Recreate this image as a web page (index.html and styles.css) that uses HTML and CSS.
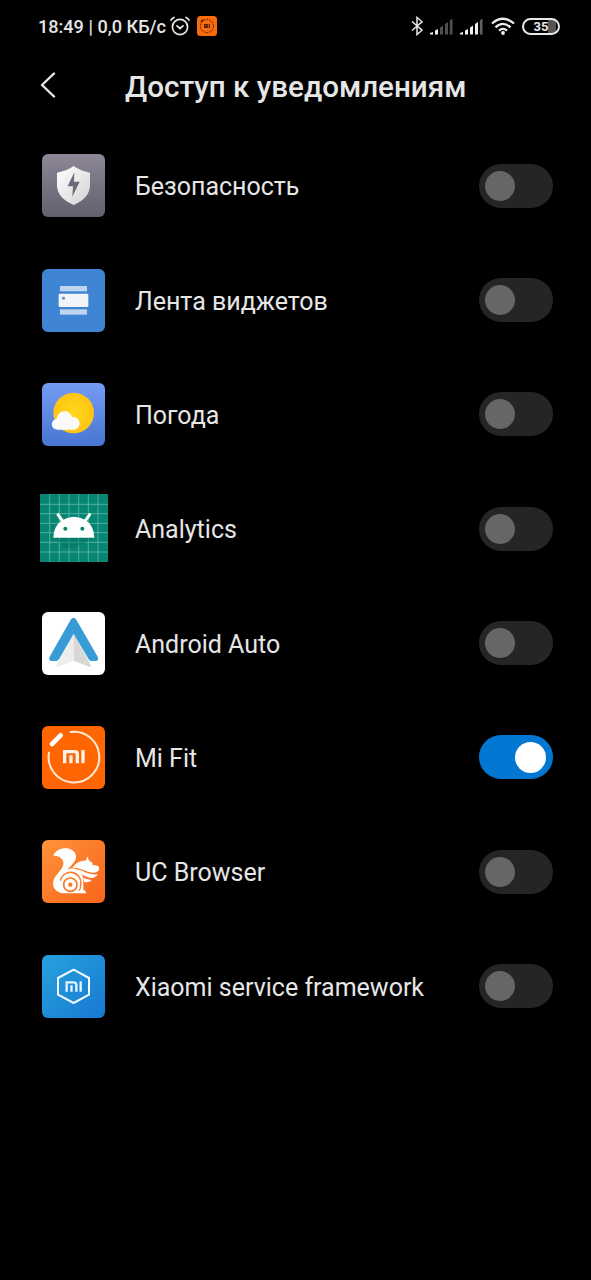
FILE: index.html
```html
<!DOCTYPE html>
<html lang="ru">
  <head>
    <meta charset="UTF-8" />
    <meta name="viewport" content="width=device-width, initial-scale=1.0" />
    <title>Доступ к уведомлениям</title>
    <link rel="stylesheet" href="styles.css">
  </head>
  <body>
    <div class="status-bar">
      <span class="status-text">18:49 | 0,0 КБ/с</span>
      <svg class="alarm" viewBox="0 0 20 20" width="20" height="20">
        <g fill="none" stroke="#e8e8e8" stroke-width="1.7" stroke-linecap="round">
          <circle cx="10" cy="11" r="7.6" />
          <path d="M1 4.2 Q2 2.4 4 1.5M19 4.2 Q18 2.4 16 1.5M7 9.8l3 2.7 3-2.7" />
        </g>
      </svg>
      <svg class="notice" viewBox="0 0 20 20" width="20" height="20">
        <rect width="20" height="20" rx="3.5" fill="#fb6a0c" />
        <circle cx="10" cy="10" r="6.6" fill="none" stroke="#7a3208" stroke-width="1.1" stroke-dasharray="2 1" />
        <path d="M4 5.6l2.3-2.1" stroke="#5a2608" stroke-width="1.6" />
        <path d="M7.7 12V8.7h2.5V12M9 10v2M12.3 8.2V12" fill="none" stroke="#4a1d04" stroke-width="1.2" />
      </svg>
      <div class="status-icons">
        <svg viewBox="0 0 12 20" width="12" height="20">
          <path d="M1 5.5l10 8.7-5 4.3V1.5l5 4.3-10 8.7" fill="none" stroke="#e8e8e8" stroke-width="1.5" />
        </svg>
        <svg class="signal" viewBox="0 0 23 17" width="23" height="17">
          <path d="M0 16.5V15l3-1v2.5zM5 16.5v-4L8 11v5.500z" fill="#eee" />
          <path d="M10 16.5v-7l3-2v9zM15 16.5V6l3-2v12.500zM19.800 16.500v-14l2.700-2v16z" fill="#505050" />
        </svg>
        <svg class="signal" viewBox="0 0 23 17" width="23" height="17">
          <path d="M0 16.500V15l3-1v2.500zM5 16.500v-4L8 11v5.500zM10 16.500v-7l3-2v9zM15 16.500V6l3-2v12.500z" fill="#eee" />
          <path d="M19.800 16.500v-14l2.700-2v16z" fill="#606060" />
        </svg>
        <svg class="wifi" viewBox="0 0 24 18" width="24" height="18">
          <g fill="none" stroke="#eee" stroke-width="2.3">
            <path d="M1 6.500Q12-3 23 6.500M4.500 10.300Q12 3.500 19.500 10.300M8 13.700Q12 10 16 13.700" />
          </g>
          <circle cx="12" cy="16" r="1.900" fill="#eee" />
        </svg>
        <span class="battery">35</span>
      </div>
    </div>

    <header class="header">
      <svg class="back" viewBox="0 0 16 26" width="16" height="26">
        <path d="M14 1.500L2 13l12 11.500" fill="none" stroke="#e8e8e8" stroke-width="2.400" stroke-linecap="round" stroke-linejoin="round" />
      </svg>
      <h1>Доступ к уведомлениям</h1>
    </header>

    <main class="app-list">
      <div class="app">
        <svg class="icon security" viewBox="36 26 189 189">
          <defs>
            <linearGradient id="shield" x1="0" y1="0" x2="1" y2="1">
              <stop offset="0" stop-color="#fff" />
              <stop offset="1" stop-color="#d2d2d2" />
            </linearGradient>
          </defs>
          <path d="M131 62Q152 77 180 82V120Q180 158 131 179Q81 158 81 120V82Q110 77 131 62z" fill="url(#shield)" />
          <path d="M133 81L113 123H129L127 154L149 109H132z" fill="#6d6979" />
        </svg>
        <span class="name">Безопасность</span>
        <span class="toggle"></span>
      </div>
      <div class="app">
        <svg class="icon widgets" viewBox="36 26 189 189">
          <rect x="90" y="77" width="81" height="16" fill="#bdd5f1" />
          <rect x="90" y="147" width="81" height="16" fill="#bdd5f1" />
          <rect x="86" y="100" width="89" height="40" rx="3" fill="#f1f4f8" />
          <rect x="96" y="109" width="9" height="9" rx="2" fill="#6e9bd0" />
        </svg>
        <span class="name">Лента виджетов</span>
        <span class="toggle"></span>
      </div>
      <div class="app">
        <svg class="icon weather" viewBox="36 26 189 189">
          <defs>
            <radialGradient id="sun">
              <stop offset="0" stop-color="#ffd91c" />
              <stop offset="1" stop-color="#ffc414" />
            </radialGradient>
          </defs>
          <circle cx="131" cy="116" r="61" fill="url(#sun)" />
          <path d="M82 166C60 165 61 135 80 134C82 106 119 103 126 128C154 126 157 163 132 166z" fill="#fafafa" />
        </svg>
        <span class="name">Погода</span>
        <span class="toggle"></span>
      </div>
      <div class="app">
        <svg class="icon analytics" viewBox="29 27 204 204">
          <path d="M58 27V231M87 27V231M116 27V231M145 27V231M174 27V231M203 27V231M29 58H233M29 86H233M29 115H233M29 143H233M29 172H233M29 201H233" stroke="#5fb8a8" stroke-width="2.500" />
          <path d="M69 158L107 190Q150 184 192 158z" fill="#04705e" opacity=".45" />
          <path d="M69 158Q70 124 95 106Q131 84 167 106Q191 124 192 158z" fill="#fff" />
          <path d="M83 89L98 110M178 89L163 110" stroke="#fff" stroke-width="9" stroke-linecap="round" />
          <circle cx="105" cy="131" r="6" fill="#078573" />
          <circle cx="156" cy="131" r="6" fill="#078573" />
        </svg>
        <span class="name">Analytics</span>
        <span class="toggle"></span>
      </div>
      <div class="app">
        <svg class="icon auto" viewBox="36 26 189 189">
          <path d="M131 90L78 189L82 191L131 172z" fill="#ededed" />
          <path d="M131 90L184 189L180 191L131 172z" fill="#d7d7d7" />
          <path d="M122 49Q130 38 139 49L203 160Q208 173 195 173H184Q179 173 176 168L131 91L87 168Q84 173 78 173H66Q54 172 59 160z" fill="#379bd5" />
        </svg>
        <span class="name">Android Auto</span>
        <span class="toggle"></span>
      </div>
      <div class="app">
        <svg class="icon fit" viewBox="36 26 189 189">
          <path d="M122 44A76 76 0 1 1 57 106" fill="none" stroke="#ffe9d7" stroke-width="6" stroke-linecap="round" />
          <path d="M66 80L92 54" stroke="#fff" stroke-width="14" stroke-linecap="round" />
          <path d="M104 138V103H134Q142 103 142 111V138M123 114V138M159 98V138" fill="none" stroke="#fff3ea" stroke-width="10" />
        </svg>
        <span class="name">Mi Fit</span>
        <span class="toggle on"></span>
      </div>
      <div class="app">
        <svg class="icon uc" viewBox="36 26 189 189">
          <path d="M70 73C79 47 125 42 137 69C144 90 119 105 111 116C122 109 139 111 148 119C157 124 160 139 160 151V176Q169 178 168 186H99C76 184 66 166 70 150C73 132 93 120 99 103C104 88 94 72 70 73z" fill="#fff" />
          <path d="M127 111C137 92 153 87 167 88L172 76L178 89Q190 94 188 101Q198 101 205 105C210 113 207 119 198 123C183 128 172 119 158 115Q142 108 127 111z" fill="#fff" />
          <path d="M142 115C160 114 169 132 203 129C196 141 185 142 174 138Q157 132 142 115z" fill="#fff" />
          <path d="M160 139Q173 145 185 146Q177 156 162 151z" fill="#fff" />
          <g fill="none" stroke="#fb7b25">
            <path d="M91 148A31 31 0 0 1 152 160Q152 170 148 178" stroke-width="4" />
            <circle cx="121" cy="160" r="20" stroke-width="5" />
          </g>
          <circle cx="121" cy="160" r="6.500" fill="#fb7b25" />
        </svg>
        <span class="name">UC Browser</span>
        <span class="toggle"></span>
      </div>
      <div class="app">
        <svg class="icon framework" viewBox="36 26 189 189">
          <path d="M131 70L177 95V145L131 170L84 145V95z" fill="none" stroke="#f2fbff" stroke-width="6" stroke-linejoin="round" />
          <path d="M110 136V108H131Q139 108 139 115V136M124.500 117V136M152 105V136" fill="none" stroke="#e4f5ff" stroke-width="7" />
        </svg>
        <span class="name">Xiaomi service framework</span>
        <span class="toggle"></span>
      </div>
    </main>
  </body>
</html>
```

FILE: styles.css
```css
body {
  font-family: Roboto, "Noto Sans", sans-serif;
  margin: 0;
  height: 1280px;
  background-color: #000;
  color: #e6e6e6;
  overflow: hidden;
}

/* Status bar */
.status-bar {
  display: flex;
  align-items: center;
  height: 52px;
  padding: 0 31px 0 38px;
}

.status-text {
  width: 128px;
  font-size: 18.1px;
  font-weight: 500;
  white-space: nowrap;
}

.alarm {
  margin-left: 4px;
}

.notice {
  margin-left: 7px;
}

.status-icons {
  display: flex;
  align-items: center;
  margin-left: auto;
}

.signal {
  margin-left: 7px;
}

.wifi {
  margin-left: 8px;
}

.battery {
  box-sizing: border-box;
  width: 38px;
  height: 17px;
  margin-left: 7px;
  border: 2px solid #e8e8e8;
  border-radius: 9px;
  background: linear-gradient(90deg, #000 24px, #555 24px 32px, #000 32px);
  font-size: 13px;
  font-weight: 700;
  line-height: 14px;
  text-align: center;
}

/* Header */
.header {
  display: flex;
  align-items: center;
  height: 66px;
  padding: 0 40px;
}

h1 {
  margin: 3px 0 0 69px;
  font-size: 29.6px;
  font-weight: 500;
  line-height: 34px;
  white-space: nowrap;
}

/* App list */
.app-list {
  padding-top: 10.6px;
}

.app {
  display: flex;
  align-items: center;
  height: 114.35px;
  padding: 0 38.5px 0 42px;
}

.icon {
  flex: none;
  width: 63px;
  height: 63px;
  border-radius: 6px;
}

.security {
  background: linear-gradient(#8d8797, #625f6f);
}

.widgets {
  background-color: #4084d4;
}

.weather {
  background: linear-gradient(#749cf4, #4876d2);
}

.analytics {
  width: 68px;
  height: 68px;
  margin: -1px -2.5px 0;
  border-radius: 0;
  background-color: #078573;
}

.auto {
  background-color: #fff;
}

.fit {
  background-color: #ff6500;
}

.uc {
  background: linear-gradient(135deg, #ff923a, #f9651b);
}

.framework {
  background: linear-gradient(135deg, #27a2dd, #1778d2);
}

.name {
  margin: 2px 0 0 30px;
  font-size: 25px;
  white-space: nowrap;
}

.toggle {
  box-sizing: border-box;
  width: 74px;
  height: 44px;
  margin-left: auto;
  padding: 7px 6.5px;
  border-radius: 22px;
  background-color: #252525;
}

.toggle::before {
  content: "";
  display: block;
  width: 30px;
  height: 30px;
  border-radius: 50%;
  background-color: #666;
}

.toggle.on {
  background-color: #0277d2;
}

.toggle.on::before {
  width: 31px;
  height: 31px;
  margin-left: auto;
  background-color: #fff;
}
```
